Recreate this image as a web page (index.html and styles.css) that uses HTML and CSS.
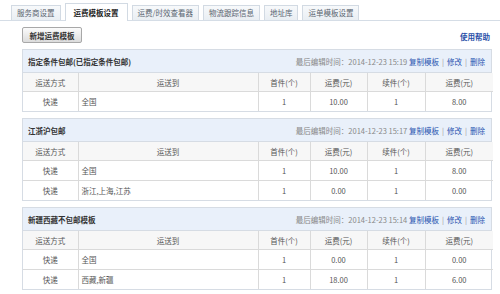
FILE: index.html
```html
<!DOCTYPE html>
<html lang="zh">
<head>
<meta charset="utf-8">
<link rel="stylesheet" href="styles.css">
</head>
<body>
<div class="page">
  <div class="tabs">
    <div class="tab">服务商设置</div>
    <div class="tab active">运费模板设置</div>
    <div class="tab">运费/时效查看器</div>
    <div class="tab">物流跟踪信息</div>
    <div class="tab">地址库</div>
    <div class="tab">运单模板设置</div>
  </div>
  <div class="toolbar">
    <button class="btn">新增运费模板</button>
    <a class="help">使用帮助</a>
  </div>

  <div class="tpl">
    <div class="tpl-head">
      <span class="tpl-title">指定条件包邮(已指定条件包邮)</span>
      <span class="tpl-meta">最后编辑时间：2014-12-23 15:19 <a class="lnk">复制模板</a><span class="sep">|</span><a class="lnk">修改</a><span class="sep">|</span><a class="lnk">删除</a></span>
    </div>
    <table class="grid">
      <colgroup><col class="c1"><col class="c2"><col class="c3"><col class="c4"><col class="c5"><col class="c6"></colgroup>
      <thead><tr><th>运送方式</th><th>运送到</th><th>首件(个)</th><th>运费(元)</th><th>续件(个)</th><th>运费(元)</th></tr></thead>
      <tbody>
        <tr><td>快递</td><td class="dest">全国</td><td>1</td><td>10.00</td><td>1</td><td>8.00</td></tr>
      </tbody>
    </table>
  </div>

  <div class="tpl">
    <div class="tpl-head">
      <span class="tpl-title">江浙沪包邮</span>
      <span class="tpl-meta">最后编辑时间：2014-12-23 15:17 <a class="lnk">复制模板</a><span class="sep">|</span><a class="lnk">修改</a><span class="sep">|</span><a class="lnk">删除</a></span>
    </div>
    <table class="grid">
      <colgroup><col class="c1"><col class="c2"><col class="c3"><col class="c4"><col class="c5"><col class="c6"></colgroup>
      <thead><tr><th>运送方式</th><th>运送到</th><th>首件(个)</th><th>运费(元)</th><th>续件(个)</th><th>运费(元)</th></tr></thead>
      <tbody>
        <tr><td>快递</td><td class="dest">全国</td><td>1</td><td>10.00</td><td>1</td><td>8.00</td></tr>
        <tr><td>快递</td><td class="dest">浙江,上海,江苏</td><td>1</td><td>0.00</td><td>1</td><td>0.00</td></tr>
      </tbody>
    </table>
  </div>

  <div class="tpl">
    <div class="tpl-head">
      <span class="tpl-title">新疆西藏不包邮模板</span>
      <span class="tpl-meta">最后编辑时间：2014-12-23 15:14 <a class="lnk">复制模板</a><span class="sep">|</span><a class="lnk">修改</a><span class="sep">|</span><a class="lnk">删除</a></span>
    </div>
    <table class="grid">
      <colgroup><col class="c1"><col class="c2"><col class="c3"><col class="c4"><col class="c5"><col class="c6"></colgroup>
      <thead><tr><th>运送方式</th><th>运送到</th><th>首件(个)</th><th>运费(元)</th><th>续件(个)</th><th>运费(元)</th></tr></thead>
      <tbody>
        <tr><td>快递</td><td class="dest">全国</td><td>1</td><td>0.00</td><td>1</td><td>0.00</td></tr>
        <tr><td>快递</td><td class="dest">西藏,新疆</td><td>1</td><td>18.00</td><td>1</td><td>6.00</td></tr>
      </tbody>
    </table>
  </div>
</div>
</body>
</html>
```

FILE: styles.css
```css
html, body {
  margin: 0;
  padding: 0;
  background: #ffffff;
}
body {
  font-family: "Noto Sans CJK SC", "Liberation Sans", sans-serif;
  font-size: 7.5px;
  color: #555555;
}
.page {
  width: 500px;
  height: 294px;
  overflow: hidden;
}
.tabs {
  display: flex;
  align-items: flex-end;
  gap: 4px;
  padding-left: 11px;
  height: 21px;
  border-bottom: 1px solid #d5dde6;
  box-sizing: border-box;
}
.tab {
  height: 15px;
  line-height: 14px;
  padding: 0 5px;
  border: 1px solid #d2dae3;
  border-bottom: none;
  background: linear-gradient(#f7f9fb, #e9eef3);
  color: #5a6570;
  box-sizing: border-box;
  white-space: nowrap;
}
.tab.active {
  height: 18px;
  line-height: 17px;
  background: #ffffff;
  color: #222222;
  font-weight: bold;
  margin-bottom: -1px;
  padding: 0 8px;
}
.toolbar {
  display: flex;
  align-items: center;
  justify-content: space-between;
  padding: 0 10px 0 22px;
  margin-top: 6px;
  height: 16px;
}
.btn {
  width: 60px;
  height: 16px;
  padding: 0;
  border: 1px solid #a8a8a8;
  border-radius: 2px;
  background: linear-gradient(#fbfbfb, #dcdcdc);
  font-family: inherit;
  font-size: 7.5px;
  font-weight: bold;
  color: #333333;
  line-height: 13px;
}
.help {
  color: #2a4fa8;
  font-weight: bold;
  margin-top: 2px;
}
.tpl {
  margin-left: 22px;
  width: 470px;
  border: 1px solid #d6dce4;
  box-sizing: border-box;
  margin-top: 6px;
}
.tpl-head {
  display: flex;
  align-items: center;
  justify-content: space-between;
  height: 22px;
  padding: 0 6px 0 5px;
  background: #e9f0fa;
  border-bottom: 1px solid #d6dce4;
}
.tpl-title {
  font-weight: bold;
  color: #333333;
}
.tpl-meta {
  color: #888888;
}
.lnk {
  color: #2a55b0;
}
.sep {
  color: #999999;
  margin: 0 3px;
}
.grid {
  width: 100%;
  border-collapse: collapse;
  table-layout: fixed;
}
.c1 { width: 55px; }
.c2 { width: 180px; }
.c3 { width: 52px; }
.c4 { width: 57px; }
.c5 { width: 58px; }
.c6 { width: 68px; }
.grid th,
.grid td {
  border: 1px solid #dadada;
  text-align: center;
  font-weight: normal;
  padding: 0;
  color: #555555;
}
.grid tr > :first-child { border-left: none; }
.grid tr > :last-child { border-right: none; }
.grid tbody tr:last-child td { border-bottom: none; }
.grid thead th {
  border-top: none;
  height: 18px;
  background: #f7f7f7;
}
.grid td {
  height: 19px;
}
.grid td.dest {
  text-align: left;
  padding-left: 3px;
}
```
